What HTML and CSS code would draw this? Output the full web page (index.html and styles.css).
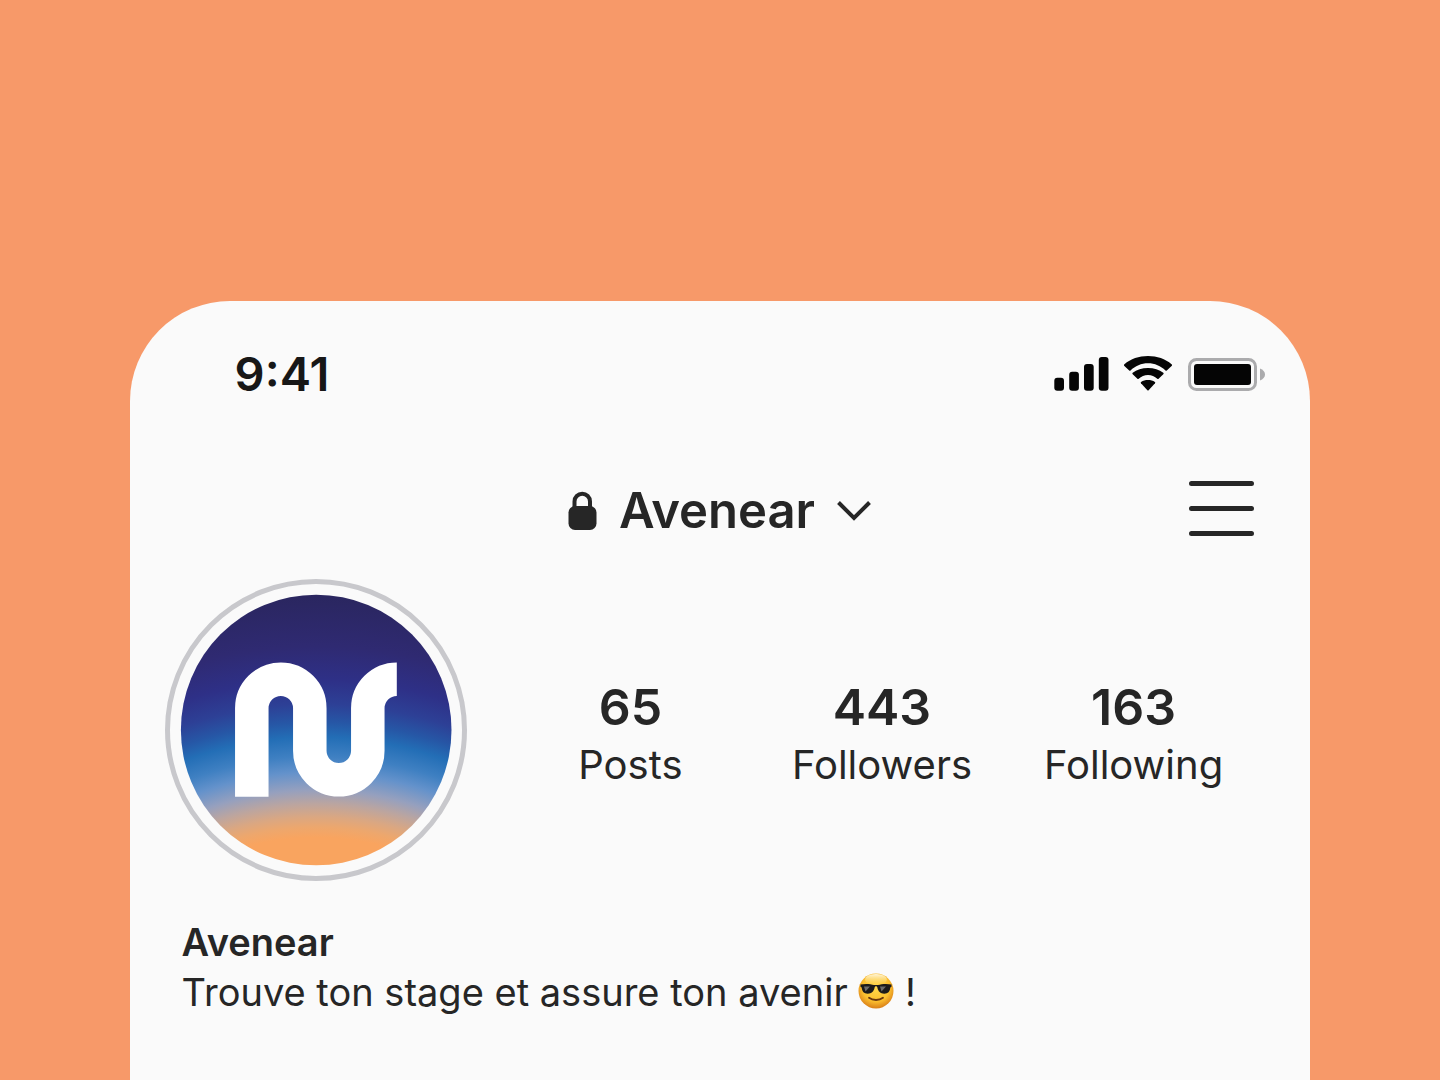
FILE: index.html
```html
<!DOCTYPE html>
<html lang="fr">

<head>
  <meta charset="UTF-8" />
  <meta name="viewport" content="width=device-width, initial-scale=1.0" />
  <title>Avenear</title>
  <link rel="stylesheet" href="styles.css">
</head>

<body>
  <main class="phone">
    <div class="status-bar">
      <span class="time">9:41</span>
      <div class="status-icons">
        <svg width="55" height="35" viewBox="0 0 55 35" role="img" aria-label="Signal">
          <rect x="0.3" y="21.7" width="9.7" height="13" rx="3" />
          <rect x="15.2" y="15.7" width="9.7" height="19" rx="3" />
          <rect x="30" y="8" width="9.7" height="26.7" rx="3" />
          <rect x="44.8" y="1" width="9.7" height="33.7" rx="3" />
        </svg>
        <svg width="48" height="35" viewBox="0 0 48 35" role="img" aria-label="Wi-Fi">
          <path d="M24 7.200c6.700 0 12.800 2.700 17.500 7.200a1 1 0 0 0 1.300 0l4.800-4.500a1 1 0 0 0 0-1.600C41.300 2.800 33.100 0 24 0S6.700 2.800.4 8.300a1 1 0 0 0 0 1.600l4.800 4.500a1 1 0 0 0 1.300 0C11.200 9.900 17.300 7.200 24 7.200z" />
          <path d="M24 18.900c3.500 0 6.700 1.400 9.300 3.800a1 1 0 0 0 1.300 0l4.700-4.400a1 1 0 0 0 0-1.500C35.300 13.800 30 12 24 12s-11.300 1.800-15.300 4.800a1 1 0 0 0 0 1.500l4.700 4.400a1 1 0 0 0 1.300 0C17.300 20.300 20.500 18.900 24 18.900z" />
          <path d="M31 27.200a.9.900 0 0 0-.1-1.300C27.200 23.300 20.800 23.300 17.100 25.900a.9.900 0 0 0-.1 1.300l6.400 7a.9.900 0 0 0 1.200 0z" />
        </svg>
        <svg width="78" height="35" viewBox="-1 0 78 35" role="img" aria-label="Batterie">
          <rect class="battery-case" x="1.500" y="3.500" width="66" height="30" rx="7" />
          <rect x="6" y="8" width="57" height="21" rx="3" />
          <path class="battery-tip" d="M72 12.500c3 1 5 3.400 5 6s-2 5-5 6z" />
        </svg>
      </div>
    </div>

    <header class="top-bar">
      <button class="account" type="button">
        <svg width="29" height="40" viewBox="0 0 29 40" aria-hidden="true">
          <rect x="0.500" y="15" width="28" height="24" rx="6.500" />
          <path class="lock-arch" d="M6.500 18v-7.500a7.500 7.500 0 0 1 15.500 0V18" />
        </svg>
        <span>Avenear</span>
        <svg class="chevron" width="34" height="22" viewBox="0 0 34 22" aria-hidden="true">
          <path d="M1.500 2.500 17 18 32.500 2.500" />
        </svg>
      </button>
      <button class="menu" type="button" aria-label="Menu">
        <svg width="65" height="56" viewBox="0 0 65 56" aria-hidden="true">
          <path d="M2.500 2.500h60M2.500 27.500h60M2.500 52.500h60" />
        </svg>
      </button>
    </header>

    <section class="profile">
      <svg class="avatar" width="302" height="302" viewBox="0 0 302 302" role="img" aria-label="Logo Avenear">
        <defs>
          <radialGradient id="sky" gradientUnits="userSpaceOnUse" cx="151" cy="539" r="524">
            <stop offset="0.535" stop-color="#f9a45f" />
            <stop offset="0.555" stop-color="#eda76d" />
            <stop offset="0.575" stop-color="#daa782" />
            <stop offset="0.6" stop-color="#bba5a0" />
            <stop offset="0.626" stop-color="#96a0be" />
            <stop offset="0.66" stop-color="#6492cb" />
            <stop offset="0.69" stop-color="#3f80c2" />
            <stop offset="0.727" stop-color="#236eb6" />
            <stop offset="0.755" stop-color="#2657a6" />
            <stop offset="0.79" stop-color="#2d4096" />
            <stop offset="0.836" stop-color="#2e3087" />
            <stop offset="0.9" stop-color="#2f2a72" />
            <stop offset="1" stop-color="#2a265f" />
          </radialGradient>
        </defs>
        <circle class="ring" cx="151" cy="151" r="148.500" />
        <circle cx="151.200" cy="151" r="135.300" fill="url(#sky)" />
        <path class="mark" d="M86.800 217.800V129.200a29 29 0 0 1 58 0V171.800a29 29 0 0 0 58 0V129.200a29 29 0 0 1 29-29" />
      </svg>
      <ul class="stats">
        <li><strong>65</strong><span>Posts</span></li>
        <li><strong>443</strong><span>Followers</span></li>
        <li><strong>163</strong><span>Following</span></li>
      </ul>
    </section>

    <section class="bio">
      <h1>Avenear</h1>
      <p>Trouve ton stage et assure ton avenir
        <svg class="emoji" width="36" height="36" viewBox="0 0 36 36" role="img" aria-label="Visage avec lunettes de soleil">
          <defs>
            <radialGradient id="face" cx="0.5" cy="0.4" r="0.6">
              <stop offset="0" stop-color="#ffd84a" />
              <stop offset="0.65" stop-color="#fcc02f" />
              <stop offset="1" stop-color="#d97f18" />
            </radialGradient>
            <linearGradient id="shine" x1="0" y1="0" x2="0" y2="1">
              <stop offset="0" stop-color="#fff6dc" />
              <stop offset="1" stop-color="#ffe58a" stop-opacity="0" />
            </linearGradient>
          </defs>
          <circle cx="18" cy="18" r="17.500" fill="url(#face)" />
          <ellipse cx="18" cy="6.500" rx="11" ry="5.500" fill="url(#shine)" />
          <path d="M2.500 11.500c4-1 10-.8 13.500.6h4c3.500-1.400 9.500-1.600 13.500-.6v2.200l-1.200.9c-.4 4.300-2.300 6.200-6 6.200-3.900 0-6.200-2.300-6.900-6.200-.3-1-.7-1.400-1.400-1.400s-1.100.4-1.400 1.400c-.7 3.900-3 6.200-6.900 6.200-3.700 0-5.600-1.900-6-6.200l-1.200-.9z" fill="#1c1b1b" />
          <path d="M6 13.500h6l-4.500 5zM22 13.500h6l-4.500 5z" fill="#6b6b6b" />
          <path d="M11 24.800c3.800 2.900 10.200 2.900 14 0" fill="none" stroke="#69370f" stroke-width="1.800" stroke-linecap="round" />
        </svg>
        !</p>
    </section>
  </main>
</body>

</html>
```

FILE: styles.css
```css
* {
  box-sizing: border-box;
}

body {
  margin: 0;
  min-height: 100vh;
  padding-top: 301px;
  display: flex;
  justify-content: center;
  background: #f79969;
  color: #262626;
  font-family: Inter, sans-serif;
}

.phone {
  width: 82%;
  background: #fafafa;
  border-radius: 100px 100px 0 0;
  padding: 43px 45px 48px 35px;
}

svg {
  flex-shrink: 0;
}

button {
  border: none;
  padding: 0;
  background: none;
  color: inherit;
  font: inherit;
  cursor: pointer;
}

.status-bar {
  display: flex;
  justify-content: space-between;
  align-items: center;
  height: 58px;
  padding-left: 70px;
  color: #171717;
}

.time {
  font-size: 47px;
  font-weight: 600;
}

.status-icons {
  display: flex;
  align-items: center;
  gap: 15px;
  fill: #050505;
}

.battery-case {
  fill: none;
  stroke: #ababad;
  stroke-width: 3;
}

.battery-tip {
  fill: #ababad;
}

.top-bar {
  display: grid;
  grid-template-columns: 1fr auto 1fr;
  align-items: center;
  margin-top: 79px;
  padding: 0 11px 0 20px;
}

.account {
  grid-column: 2;
  display: flex;
  align-items: center;
  gap: 22px;
  font-size: 49px;
  font-weight: 600;
  line-height: 60px;
  fill: #262626;
}

.lock-arch {
  fill: none;
  stroke: #262626;
  stroke-width: 4;
}

.chevron {
  fill: none;
  stroke: #262626;
  stroke-width: 4;
}

.menu {
  align-self: start;
  justify-self: end;
}

.menu svg {
  display: block;
  stroke: #262626;
  stroke-width: 5;
  stroke-linecap: round;
}

.profile {
  display: flex;
  align-items: center;
  gap: 38px;
  margin-top: 38px;
}

.ring {
  fill: none;
  stroke: #c8c8cc;
  stroke-width: 5;
}

.mark {
  fill: none;
  stroke: #fff;
  stroke-width: 33.500;
}

.stats {
  flex: 1;
  display: grid;
  grid-template-columns: repeat(3, 1fr);
  margin: 0;
  padding: 8px 6px 0 0;
  list-style: none;
  text-align: center;
}

.stats li {
  display: flex;
  flex-direction: column;
}

.stats strong {
  font-size: 50px;
  font-weight: 600;
  line-height: 62px;
}

.stats span {
  font-size: 40px;
  line-height: 54px;
}

.bio {
  margin-top: 36px;
  padding-left: 17px;
  font-size: 38px;
  line-height: 50px;
}

.bio h1 {
  margin: 0;
  font-size: 38px;
  font-weight: 600;
}

.bio p {
  margin: 0;
}

.emoji {
  vertical-align: -3px;
}
```
